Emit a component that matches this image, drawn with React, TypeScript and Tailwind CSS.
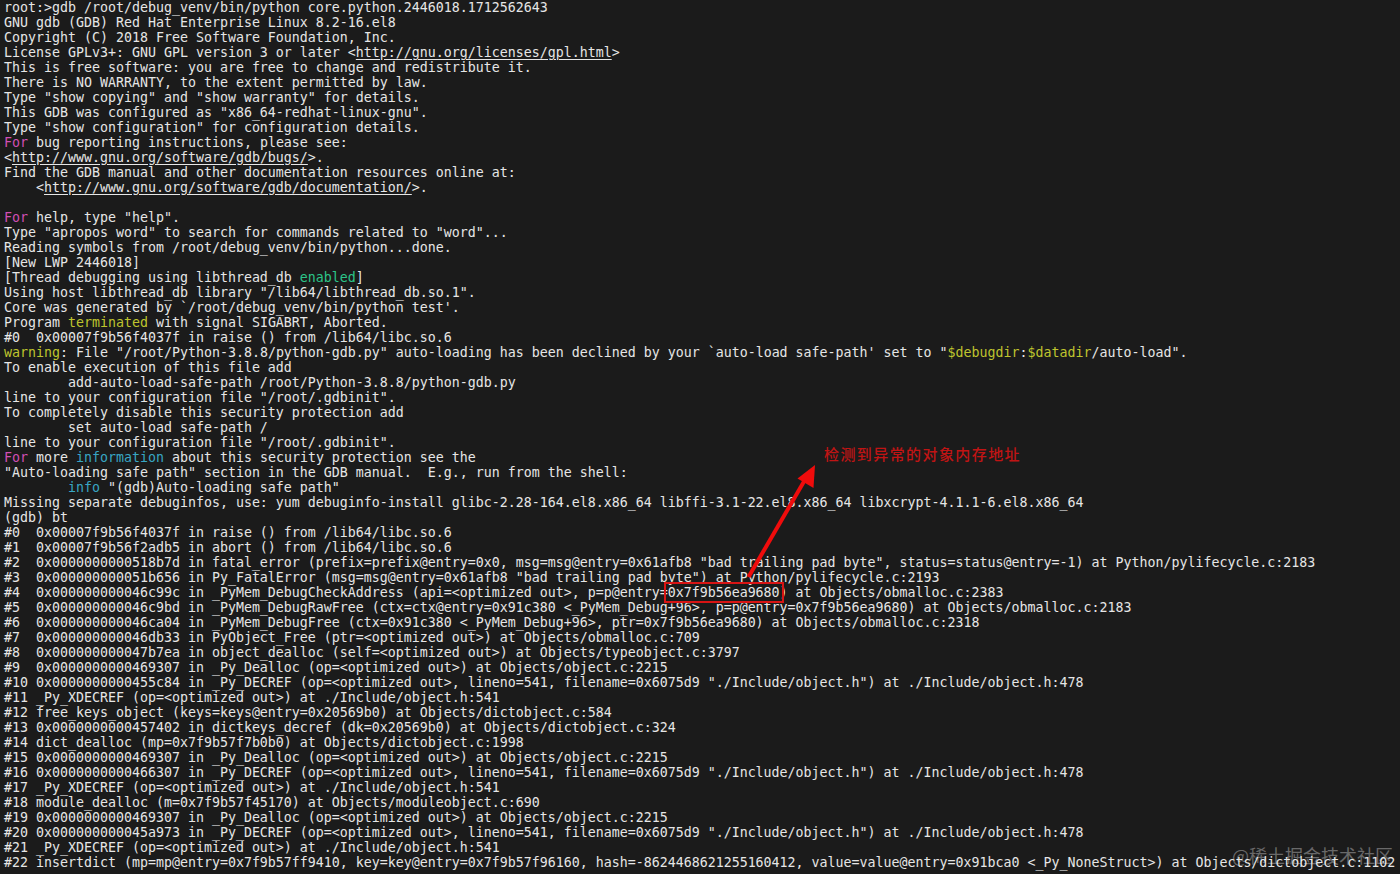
const mono = 'font-["DejaVu_Sans_Mono","Liberation_Mono",monospace]';

type Seg = string | [string, "m" | "g" | "y" | "c" | "u"];

const tone: Record<string, string> = {
  m: "text-[#d14fb4]",
  g: "text-[#2cc489]",
  y: "text-[#bfc42e]",
  c: "text-[#38a6c4]",
  u: "underline underline-offset-2",
};

const lines: Seg[][] = [
  ["root:>gdb /root/debug_venv/bin/python core.python.2446018.1712562643"],
  ["GNU gdb (GDB) Red Hat Enterprise Linux 8.2-16.el8"],
  ["Copyright (C) 2018 Free Software Foundation, Inc."],
  ["License GPLv3+: GNU GPL version 3 or later <", ["http://gnu.org/licenses/gpl.html", "u"], ">"],
  ["This is free software: you are free to change and redistribute it."],
  ["There is NO WARRANTY, to the extent permitted by law."],
  ['Type "show copying" and "show warranty" for details.'],
  ['This GDB was configured as "x86_64-redhat-linux-gnu".'],
  ['Type "show configuration" for configuration details.'],
  [["For", "m"], " bug reporting instructions, please see:"],
  ["<", ["http://www.gnu.org/software/gdb/bugs/", "u"], ">."],
  ["Find the GDB manual and other documentation resources online at:"],
  ["    <", ["http://www.gnu.org/software/gdb/documentation/", "u"], ">."],
  [""],
  [["For", "m"], ' help, type "help".'],
  ['Type "apropos word" to search for commands related to "word"...'],
  ["Reading symbols from /root/debug_venv/bin/python...done."],
  ["[New LWP 2446018]"],
  ["[Thread debugging using libthread_db ", ["enabled", "g"], "]"],
  ['Using host libthread_db library "/lib64/libthread_db.so.1".'],
  ["Core was generated by `/root/debug_venv/bin/python test'."],
  ["Program ", ["terminated", "y"], " with signal SIGABRT, Aborted."],
  ["#0  0x00007f9b56f4037f in raise () from /lib64/libc.so.6"],
  [
    ["warning", "y"],
    ': File "/root/Python-3.8.8/python-gdb.py" auto-loading has been declined by your `auto-load safe-path\' set to "',
    ["$debugdir", "y"],
    ":",
    ["$datadir", "y"],
    '/auto-load".',
  ],
  ["To enable execution of this file add"],
  ["        add-auto-load-safe-path /root/Python-3.8.8/python-gdb.py"],
  ['line to your configuration file "/root/.gdbinit".'],
  ["To completely disable this security protection add"],
  ["        set auto-load safe-path /"],
  ['line to your configuration file "/root/.gdbinit".'],
  [["For", "m"], " more ", ["information", "c"], " about this security protection see the"],
  ['"Auto-loading safe path" section in the GDB manual.  E.g., run from the shell:'],
  ["        ", ["info", "c"], ' "(gdb)Auto-loading safe path"'],
  ["Missing separate debuginfos, use: yum debuginfo-install glibc-2.28-164.el8.x86_64 libffi-3.1-22.el8.x86_64 libxcrypt-4.1.1-6.el8.x86_64"],
  ["(gdb) bt"],
  ["#0  0x00007f9b56f4037f in raise () from /lib64/libc.so.6"],
  ["#1  0x00007f9b56f2adb5 in abort () from /lib64/libc.so.6"],
  ['#2  0x0000000000518b7d in fatal_error (prefix=prefix@entry=0x0, msg=msg@entry=0x61afb8 "bad trailing pad byte", status=status@entry=-1) at Python/pylifecycle.c:2183'],
  ['#3  0x000000000051b656 in Py_FatalError (msg=msg@entry=0x61afb8 "bad trailing pad byte") at Python/pylifecycle.c:2193'],
  ["#4  0x000000000046c99c in _PyMem_DebugCheckAddress (api=<optimized out>, p=p@entry=0x7f9b56ea9680) at Objects/obmalloc.c:2383"],
  ["#5  0x000000000046c9bd in _PyMem_DebugRawFree (ctx=ctx@entry=0x91c380 <_PyMem_Debug+96>, p=p@entry=0x7f9b56ea9680) at Objects/obmalloc.c:2183"],
  ["#6  0x000000000046ca04 in _PyMem_DebugFree (ctx=0x91c380 <_PyMem_Debug+96>, ptr=0x7f9b56ea9680) at Objects/obmalloc.c:2318"],
  ["#7  0x000000000046db33 in PyObject_Free (ptr=<optimized out>) at Objects/obmalloc.c:709"],
  ["#8  0x000000000047b7ea in object_dealloc (self=<optimized out>) at Objects/typeobject.c:3797"],
  ["#9  0x0000000000469307 in _Py_Dealloc (op=<optimized out>) at Objects/object.c:2215"],
  ['#10 0x0000000000455c84 in _Py_DECREF (op=<optimized out>, lineno=541, filename=0x6075d9 "./Include/object.h") at ./Include/object.h:478'],
  ["#11 _Py_XDECREF (op=<optimized out>) at ./Include/object.h:541"],
  ["#12 free_keys_object (keys=keys@entry=0x20569b0) at Objects/dictobject.c:584"],
  ["#13 0x0000000000457402 in dictkeys_decref (dk=0x20569b0) at Objects/dictobject.c:324"],
  ["#14 dict_dealloc (mp=0x7f9b57f7b0b0) at Objects/dictobject.c:1998"],
  ["#15 0x0000000000469307 in _Py_Dealloc (op=<optimized out>) at Objects/object.c:2215"],
  ['#16 0x0000000000466307 in _Py_DECREF (op=<optimized out>, lineno=541, filename=0x6075d9 "./Include/object.h") at ./Include/object.h:478'],
  ["#17 _Py_XDECREF (op=<optimized out>) at ./Include/object.h:541"],
  ["#18 module_dealloc (m=0x7f9b57f45170) at Objects/moduleobject.c:690"],
  ["#19 0x0000000000469307 in _Py_Dealloc (op=<optimized out>) at Objects/object.c:2215"],
  ['#20 0x000000000045a973 in _Py_DECREF (op=<optimized out>, lineno=541, filename=0x6075d9 "./Include/object.h") at ./Include/object.h:478'],
  ["#21 _Py_XDECREF (op=<optimized out>) at ./Include/object.h:541"],
  ["#22 insertdict (mp=mp@entry=0x7f9b57ff9410, key=key@entry=0x7f9b57f96160, hash=-8624468621255160412, value=value@entry=0x91bca0 <_Py_NoneStruct>) at Objects/dictobject.c:1102"],
];

export default function App() {
  return (
    <div className="relative h-[874px] w-[1400px] overflow-hidden bg-[#1b1b1b]">
      <div className={`${mono} pl-[4px] text-[13.29px] leading-[15px] text-[#e6e6e6]`}>
        {lines.map((line, i) => (
          <div key={i} className="h-[15px] whitespace-pre">
            {line.map((seg, j) =>
              typeof seg === "string" ? (
                <span key={j}>{seg}</span>
              ) : (
                <span key={j} className={tone[seg[1]]}>
                  {seg[0]}
                </span>
              ),
            )}
          </div>
        ))}
      </div>

      {/* annotation: red box around the address */}
      <div className="absolute left-[664px] top-[582px] h-[21px] w-[120px] border-2 border-[#d81414]" />

      {/* annotation: arrow */}
      <svg className="absolute left-[740px] top-[458px]" width="84" height="124" viewBox="0 0 84 124">
        <path d="M8.5 119 L66 20" stroke="#f00c0c" strokeWidth="4" fill="none" />
        <path d="M75 7 L73.5 30 L57.5 20.5 Z" fill="#f00c0c" />
      </svg>

      {/* annotation: caption */}
      <div className='absolute left-[824px] top-[444px] font-["Noto_Sans_CJK_SC",sans-serif] text-[15px] font-medium leading-[20px] tracking-[1.42px] text-[#c01414]'>
        检测到异常的对象内存地址
      </div>

      {/* watermark */}
      <div className='absolute left-[1232px] top-[843px] font-["Noto_Sans_CJK_SC",sans-serif] text-[18px] leading-[24px] text-[#ffffff]/35'>
        @稀土掘金技术社区
      </div>
    </div>
  );
}
